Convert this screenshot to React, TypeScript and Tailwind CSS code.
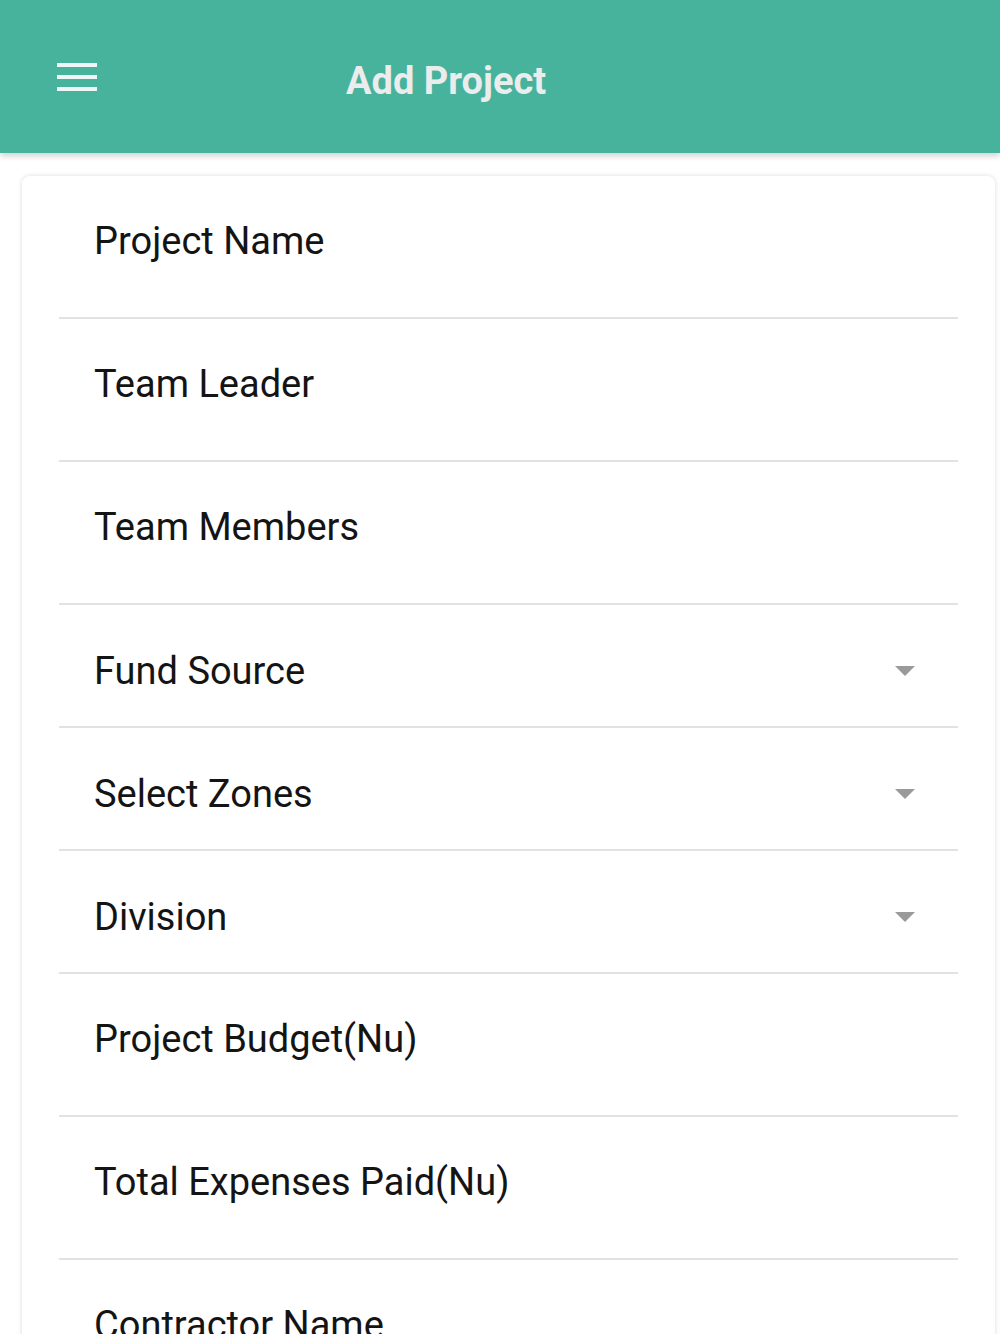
import React from "react";

const rows: { label: string; select?: boolean }[] = [
  { label: "Project Name" },
  { label: "Team Leader" },
  { label: "Team Members" },
  { label: "Fund Source", select: true },
  { label: "Select Zones", select: true },
  { label: "Division", select: true },
  { label: "Project Budget(Nu)" },
  { label: "Total Expenses Paid(Nu)" },
  { label: "Contractor Name" },
];

export default function App() {
  return (
    <div
      className="w-[1000px] h-[1334px] overflow-hidden bg-white"
      style={{ fontFamily: "Roboto, 'Noto Sans', sans-serif" }}
    >
      <div className="h-[153px] bg-[#47b39c] flex items-center relative shadow-[0_3px_6px_rgba(0,0,0,0.18)] z-10">
        <div className="absolute left-[57px] top-[63px] w-[40px] flex flex-col gap-[8px]">
          <div className="h-[4px] bg-[#eef7f5]" />
          <div className="h-[4px] bg-[#eef7f5]" />
          <div className="h-[4px] bg-[#eef7f5]" />
        </div>
        <div className="ml-[346px] text-[38px] font-bold text-[#ececec] leading-none mt-[8px]">
          Add Project
        </div>
      </div>
      <div className="pt-[23px] pl-[22px] pr-[5px]">
        <div className="bg-white rounded-[8px] shadow-[0_0_5px_rgba(0,0,0,0.14)] px-[37px]">
          {rows.map((r) => (
            <div
              key={r.label}
              className={
                "flex flex-col border-b-2 border-[#e2e2e2] " +
                (r.select ? "h-[123px] pt-[45px]" : "h-[143px] pt-[44px]")
              }
            >
              <div className="flex items-center">
                <div className="pl-[35px] text-[38px] leading-[42px] text-[#141414]">
                  {r.label}
                </div>
                {r.select && (
                  <div className="ml-auto mr-[43px] w-0 h-0 border-l-[10px] border-r-[10px] border-t-[10px] border-l-transparent border-r-transparent border-t-[#9a9a9a]" />
                )}
              </div>
            </div>
          ))}
        </div>
      </div>
    </div>
  );
}
